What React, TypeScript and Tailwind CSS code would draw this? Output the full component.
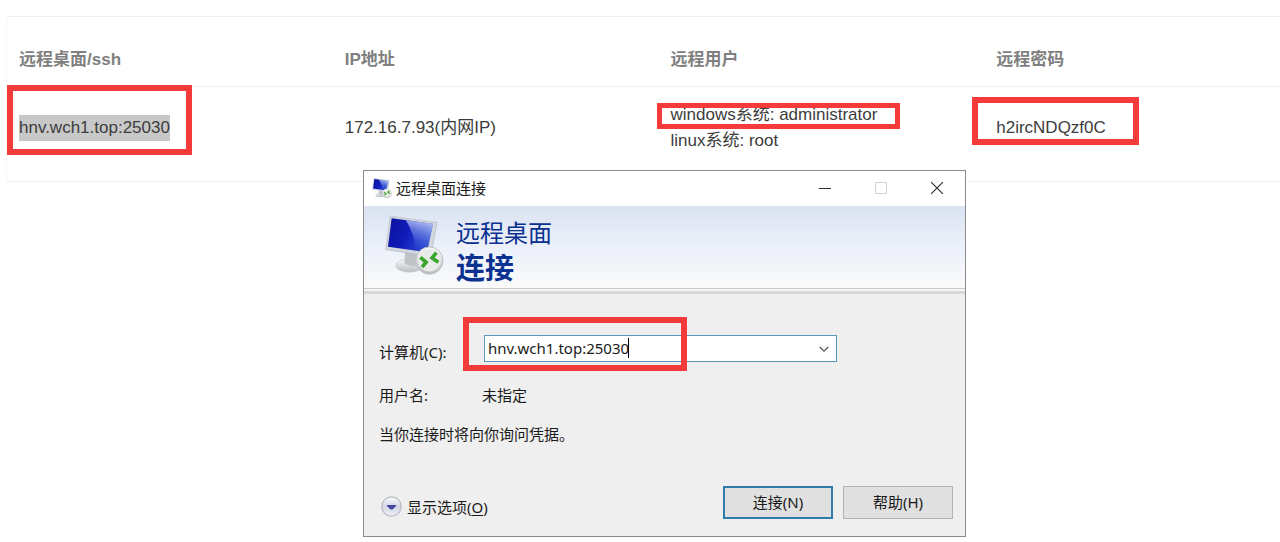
import { useId } from "react";

function Mark({ className }: { className: string }) {
  return <span aria-hidden="true" className={`pointer-events-none absolute border-[#f33b3b] ${className}`} />;
}

function RemoteIcon({ className }: { className: string }) {
  const id = useId();
  return (
    <svg className={className} viewBox="75 148 178 180" aria-hidden="true">
      <defs>
        <linearGradient id={`${id}s`} x1="0" y1="0" x2="1" y2="0.35">
          <stop offset="0" stopColor="#0a129a" />
          <stop offset="0.5" stopColor="#101cba" />
          <stop offset="1" stopColor="#2c48d0" />
        </linearGradient>
        <linearGradient id={`${id}g`} x1="0.6" y1="0" x2="0.4" y2="1">
          <stop offset="0" stopColor="#e8f0ff" stopOpacity="0.75" />
          <stop offset="0.5" stopColor="#8aa4f0" stopOpacity="0.45" />
          <stop offset="1" stopColor="#3a5ce0" stopOpacity="0" />
        </linearGradient>
        <linearGradient id={`${id}b`} x1="0" y1="0" x2="0" y2="1">
          <stop offset="0" stopColor="#fafafa" />
          <stop offset="1" stopColor="#b8bcc0" />
        </linearGradient>
      </defs>
      <ellipse cx="148" cy="300" rx="41" ry="20" fill={`url(#${id}b)`} stroke="#c8ccd0" strokeWidth="2" />
      <path d="M135 258 L182 264 L178 298 Q155 306 134 294 Z" fill="#bfc3c8" />
      <path d="M91 151 L232 170 L213 272 L77 252 Z" fill="#d3d8de" stroke="#b4b9c2" strokeWidth="2" />
      <path d="M95 157 L220 174 L202 260 L84 243 Z" fill={`url(#${id}s)`} />
      <path d="M138 163 L220 174 L206 242 L168 255 Q164 205 138 163 Z" fill={`url(#${id}g)`} />
      <circle cx="209" cy="285" r="41" fill={`url(#${id}b)`} stroke="#bcc0c2" strokeWidth="3" />
      <circle cx="209" cy="284" r="34" fill="#e9ebea" />
      <path d="M182 275 L199 290 L187 305" fill="none" stroke="#37a52c" strokeWidth="11" />
      <path d="M230 261 L217 277 L236 290" fill="none" stroke="#37a52c" strokeWidth="11" />
    </svg>
  );
}

const columns = ["远程桌面/ssh", "IP地址", "远程用户", "远程密码"];

function AccessTable() {
  const cell = "relative h-[95px] border-b border-[#f0f0f0] px-3 pb-3 align-middle";
  return (
    <table className="ml-1.5 w-[calc(100%+24px)] table-fixed border-separate border-spacing-0 border-t border-l border-t-[#f0f0f0] border-l-[#f7f7f7] text-left text-[17px] leading-[26px] text-[#3c3c3c]">
      <thead>
        <tr>
          {columns.map((c) => (
            <th key={c} scope="col" className="h-[70px] border-b border-[#f0f0f0] px-3 pt-4 align-middle font-bold text-[#808080]">
              {c}
            </th>
          ))}
        </tr>
      </thead>
      <tbody>
        <tr>
          <td className={cell}>
            <span className="inline-block bg-[#c8c8c8]">hnv.wch1.top:25030</span>
            <Mark className="top-[-2px] left-0 h-[70px] w-[185px] border-6" />
          </td>
          <td className={cell}>172.16.7.93(内网IP)</td>
          <td className={cell}>
            windows系统: administrator
            <br />
            linux系统: root
            <Mark className="top-4 left-[-2px] h-[26px] w-[243px] border-5" />
          </td>
          <td className={cell}>
            h2ircNDQzf0C
            <Mark className="top-2.5 left-[-12px] h-12 w-[167px] border-6" />
          </td>
        </tr>
      </tbody>
    </table>
  );
}

function Dialog() {
  return (
    <section
      aria-label="远程桌面连接"
      className="absolute top-[170px] left-[363px] w-[603px] border border-[#8a8a8a] bg-[#efefef] font-['Noto_Sans','Noto_Sans_CJK_SC',sans-serif] text-[15px] leading-[22px] text-[#1a1a1a]"
    >
      <header className="flex h-[35px] items-center bg-white pb-px pl-2">
        <RemoteIcon className="mr-1 h-5 w-5" />
        <h1 className="grow">远程桌面连接</h1>
        <button type="button" aria-label="最小化" className="grid h-8 w-14 place-items-center">
          <svg className="h-3 w-3" viewBox="0 0 12 12"><path d="M0 6.5H12" stroke="#333" /></svg>
        </button>
        <button type="button" disabled aria-label="最大化" className="grid h-8 w-14 place-items-center">
          <svg className="h-3 w-3" viewBox="0 0 12 12"><path d="M.5.5H11.5V11.5H.5Z" fill="none" stroke="#ccd3d6" /></svg>
        </button>
        <button type="button" aria-label="关闭" className="grid h-8 w-14 place-items-center">
          <svg className="h-3 w-3" viewBox="0 0 12 12"><path d="M0 0L12 12M12 0L0 12" stroke="#333" strokeWidth="1.2" /></svg>
        </button>
      </header>
      <div className="flex h-[82px] bg-linear-to-b from-[#dae3f1] via-[#eaeffa] via-45% to-[#fafafa] pt-[9px] pl-[21px] text-[#0b3191]">
        <RemoteIcon className="h-[60px] w-[59px] shrink-0" />
        <p className="pl-3">
          <span className="block text-2xl leading-[35px]">远程桌面</span>
          <span className="block text-[29px] leading-9 font-bold">连接</span>
        </p>
      </div>
      <div className="h-[6px] border-t border-b-3 border-t-[#c8c8c8] border-b-[#d8d8d8] bg-[#f4f4f4]" />
      <form className="pt-[41px] pr-3 pb-[17px] pl-[15px]" onSubmit={(e) => e.preventDefault()}>
        <div className="flex h-[27px]">
          <label htmlFor="computer" className="w-[105px] pt-1.5">计算机(C):</label>
          <div className="relative flex w-[353px] border border-[#5a96bc] bg-white">
            <input id="computer" defaultValue="hnv.wch1.top:25030" className="min-w-0 grow bg-transparent pb-0.5 pl-[3px] outline-none" />
            <button type="button" aria-label="展开列表" className="grid w-6 place-items-center">
              <svg className="h-2.5 w-2.5" viewBox="0 0 10 10"><path d="M.8 3L5 7.2L9.2 3" fill="none" stroke="#555" strokeWidth="1.2" /></svg>
            </button>
            <span aria-hidden="true" className="absolute top-0.5 left-[143px] h-5 w-px bg-black" />
            <Mark className="top-[-19px] left-[-22px] h-[54px] w-[224px] border-6" />
          </div>
        </div>
        <div className="mt-[22px] flex">
          <span className="w-[103px]">用户名:</span>
          <span>未指定</span>
        </div>
        <p className="mt-[17px]">当你连接时将向你询问凭据。</p>
        <div className="mt-[41px] flex items-center gap-2.5">
          <button type="button" className="mr-auto flex items-center gap-[5px] pt-2 pl-0.5">
            <svg className="h-[21px] w-[21px]" viewBox="0 0 21 21" aria-hidden="true">
              <defs>
                <linearGradient id="knob" x1="0" y1="0" x2="0" y2="1">
                  <stop offset="0" stopColor="#fff" />
                  <stop offset="0.5" stopColor="#d0d5e2" />
                  <stop offset="1" stopColor="#f0f2f8" />
                </linearGradient>
              </defs>
              <circle cx="10.5" cy="10.5" r="9.7" fill="url(#knob)" stroke="#b9bcc4" strokeWidth="1.2" />
              <path d="M6 9H15V10L11.5 13.5H9.5L6 10Z" fill="#43479f" />
            </svg>
            <span>显示选项(<u className="underline-offset-2">O</u>)</span>
          </button>
          <button type="submit" className="h-[33px] w-[110px] border-2 border-[#2f7cab] bg-[#e0e0e0] pb-0.5">连接(N)</button>
          <button type="button" className="h-[33px] w-[110px] border border-[#b2b2b2] bg-[#e0e0e0] pb-0.5">帮助(H)</button>
        </div>
      </form>
    </section>
  );
}

export default function App() {
  return (
    <main className="relative min-h-screen overflow-hidden bg-white pt-4 font-['Liberation_Sans','Noto_Sans_CJK_SC',sans-serif]">
      <AccessTable />
      <Dialog />
    </main>
  );
}
